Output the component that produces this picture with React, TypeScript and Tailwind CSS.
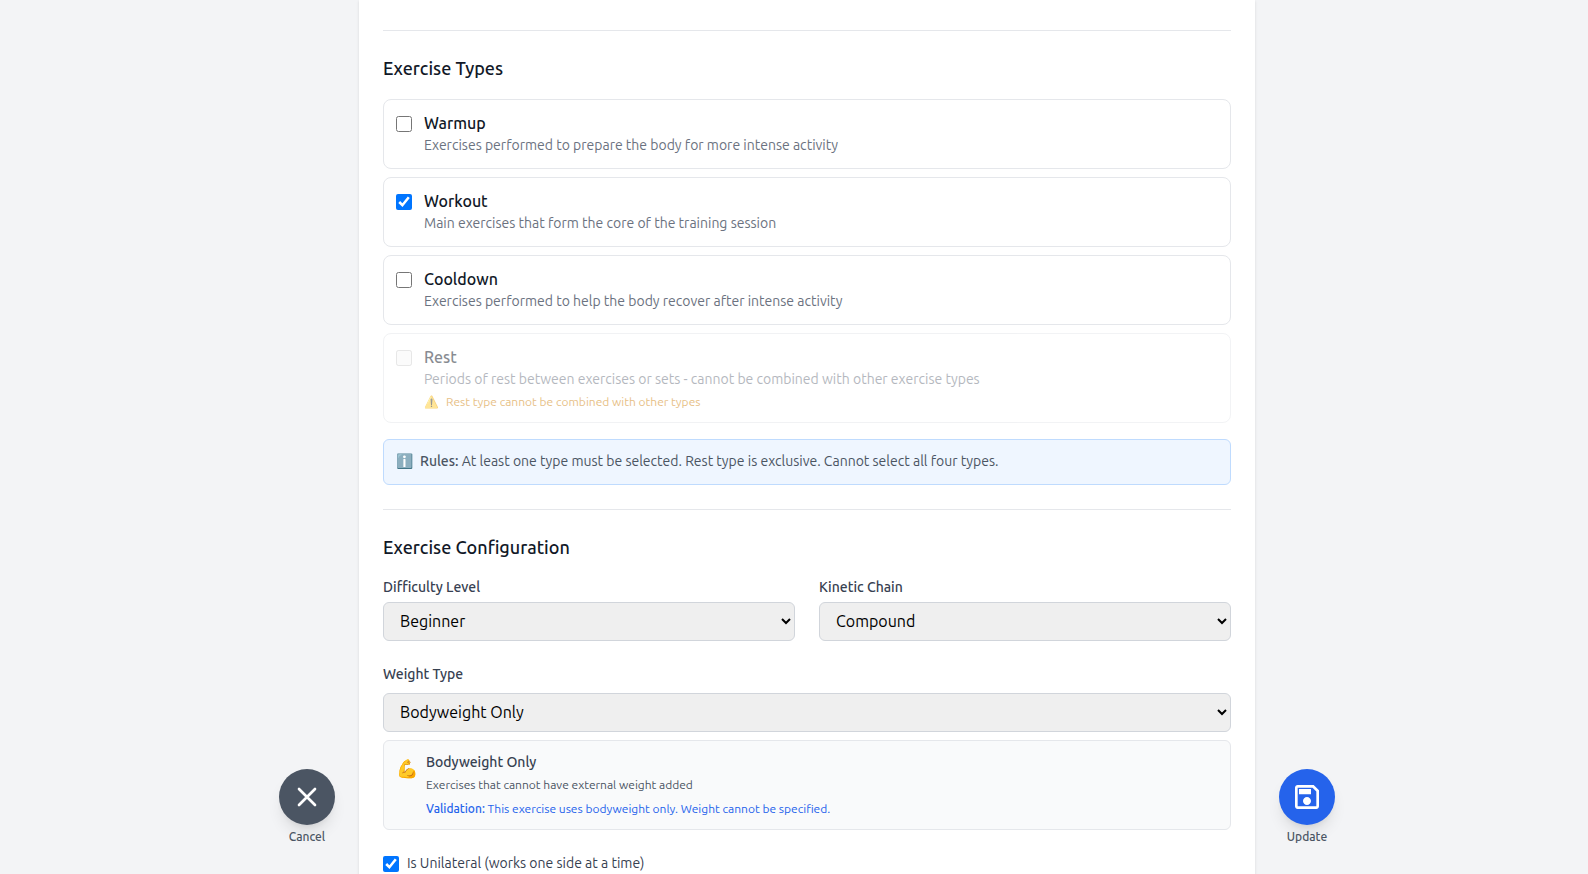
import React from 'react';

type ExerciseType = { name: string; description: string; checked?: boolean; warning?: string };

const exerciseTypes: ExerciseType[] = [
  { name: 'Warmup', description: 'Exercises performed to prepare the body for more intense activity' },
  { name: 'Workout', description: 'Main exercises that form the core of the training session', checked: true },
  { name: 'Cooldown', description: 'Exercises performed to help the body recover after intense activity' },
  {
    name: 'Rest',
    description: 'Periods of rest between exercises or sets - cannot be combined with other exercise types',
    warning: 'Rest type cannot be combined with other types',
  },
];

function TypeCard({ type }: { type: ExerciseType }) {
  const disabled = Boolean(type.warning);
  return (
    <label
      className={`flex items-start rounded-lg border border-[#e5e7eb] p-3 ${disabled ? 'h-[90px] opacity-50' : 'h-[70px]'}`}
    >
      <input type="checkbox" defaultChecked={type.checked} disabled={disabled} className="mt-1 mr-3 size-4 shrink-0" />
      <div className="-mt-px flex-1">
        <div className="text-base/6 font-medium text-[#111827]">{type.name}</div>
        <div className="text-sm/5 text-[#6b7280]">{type.description}</div>
        {type.warning && (
          <div className="mt-[5px] text-xs text-[#d08205]">
            <span className="mr-[7px]">⚠️</span>
            {type.warning}
          </div>
        )}
      </div>
    </label>
  );
}

function Select({ value }: { value: string }) {
  return (
    <select className="block h-[39px] w-full rounded-md border border-[#d1d5db] bg-[#efefef] px-3 py-2 text-base text-black">
      <option>{value}</option>
    </select>
  );
}

function RoundAction({ label, color, children }: { label: string; color: string; children: React.ReactNode }) {
  return (
    <div className="flex w-14 shrink-0 flex-col items-center self-end pb-[29px]">
      <button className={`flex size-14 items-center justify-center rounded-full text-white shadow-lg ${color}`}>
        {children}
      </button>
      <span className="mt-1 text-xs font-medium text-[#4b5563]">{label}</span>
    </div>
  );
}

export default function App() {
  return (
    <div className="flex h-[874px] justify-center gap-6 overflow-hidden bg-[#f3f4f6] pl-[26px] font-[Ubuntu,'Noto_Sans',sans-serif]">
      <RoundAction label="Cancel" color="bg-[#4b5563]">
        <svg className="size-8" viewBox="0 0 24 24" fill="none" stroke="currentColor" strokeWidth="2" strokeLinecap="round" strokeLinejoin="round">
          <path d="M6 18L18 6M6 6l12 12" />
        </svg>
      </RoundAction>

      <main className="h-[900px] w-[896px] shrink-0 bg-white px-6 pt-[29.5px] shadow-sm">
        <section className="border-t border-[#e5e7eb] pt-[23px]">
          <h3 className="mb-[17px] text-lg font-medium text-[#111827]">Exercise Types</h3>
          <div className="flex flex-col gap-2">
            {exerciseTypes.map((type) => (
              <TypeCard key={type.name} type={type} />
            ))}
          </div>
          <div className="mt-4 h-[46px] rounded-md border border-[#bfdbfe] bg-[#eff6ff] px-3 pt-[11px] text-sm text-[#4b5563]">
            <span className="mr-[7px]">ℹ️</span>
            <span className="font-medium">Rules:</span> At least one type must be selected. Rest type is exclusive. Cannot
            select all four types.
          </div>
        </section>

        <section className="mt-6 border-t border-[#e5e7eb] pt-[23px]">
          <h3 className="mb-4 text-lg font-medium text-[#111827]">Exercise Configuration</h3>
          <div className="grid grid-cols-2 gap-6">
            <div>
              <label className="mb-[5px] block text-sm font-medium text-[#374151]">Difficulty Level</label>
              <Select value="Beginner" />
            </div>
            <div>
              <label className="mb-[5px] block text-sm font-medium text-[#374151]">Kinetic Chain</label>
              <Select value="Compound" />
            </div>
          </div>

          <label className="mt-[23px] mb-[9px] block text-sm font-medium text-[#374151]">Weight Type</label>
          <Select value="Bodyweight Only" />
          <div className="mt-2 flex h-[90px] items-start rounded-md border border-[#e5e7eb] bg-[#f9fafb] p-3">
            <span className="mt-px mr-2 text-lg">💪</span>
            <div className="-mt-px">
              <div className="text-sm/5 font-medium text-[#374151]">Bodyweight Only</div>
              <div className="mt-[5px] text-xs text-[#4b5563]">Exercises that cannot have external weight added</div>
              <div className="mt-2 text-xs text-[#2563eb]">
                <span className="font-medium">Validation:</span> This exercise uses bodyweight only. Weight cannot be
                specified.
              </div>
            </div>
          </div>

          <label className="mt-[23px] flex items-center text-sm text-[#374151]">
            <input type="checkbox" defaultChecked className="mr-2 size-4" />
            <span className="pb-0.5">Is Unilateral (works one side at a time)</span>
          </label>
        </section>
      </main>

      <RoundAction label="Update" color="bg-[#2563eb]">
        <svg className="size-8" viewBox="0 0 24 24" fill="currentColor">
          <path d="M17 3H5c-1.11 0-2 .9-2 2v14c0 1.1.89 2 2 2h14c1.1 0 2-.9 2-2V7l-4-4zm2 16H5V5h11.17L19 7.83V19zm-7-7c-1.66 0-3 1.34-3 3s1.34 3 3 3 3-1.34 3-3-1.34-3-3-3zM6 6h9v4H6V6z" />
        </svg>
      </RoundAction>
    </div>
  );
}
